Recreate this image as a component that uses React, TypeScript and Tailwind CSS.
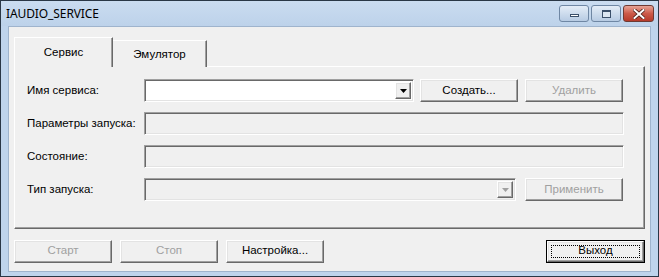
import React from "react";

const raised =
  "border border-t-white border-l-white border-r-[#696969] border-b-[#696969] shadow-[inset_-1px_-1px_0_#a0a0a0,inset_1px_1px_0_#e3e3e3]";
const sunken =
  "border border-t-[#a0a0a0] border-l-[#a0a0a0] border-r-white border-b-white shadow-[inset_1px_1px_0_#696969,inset_-1px_-1px_0_#e3e3e3]";

interface BtnProps {
  label: string;
  disabled?: boolean;
}

const WinButton: React.FC<BtnProps> = ({ label, disabled }) => (
  <button
    className={`w-[98px] h-[23px] bg-[#f0f0f0] text-[11.5px] flex items-center justify-center ${raised} ${
      disabled ? "text-[#a0a0a0]" : "text-black"
    }`}
  >
    {label}
  </button>
);

const ComboBox: React.FC<{ width: string; disabled?: boolean }> = ({
  width,
  disabled,
}) => (
  <div
    className={`${width} h-[23px] flex items-stretch justify-end p-[2px] ${sunken} ${
      disabled ? "bg-[#f0f0f0]" : "bg-white"
    }`}
  >
    <div className={`w-[16px] flex items-center justify-center bg-[#f0f0f0] ${raised}`}>
      <svg width="7" height="4" viewBox="0 0 7 4">
        <path d="M0 0h7L3.5 4z" fill={disabled ? "#a0a0a0" : "#000"} />
      </svg>
    </div>
  </div>
);

const Row: React.FC<{ label: string; children: React.ReactNode }> = ({
  label,
  children,
}) => (
  <div className="flex items-center h-[23px]">
    <span className="w-[117px] text-[11.5px] text-black">{label}</span>
    {children}
  </div>
);

const CaptionButtons: React.FC = () => (
  <div className="flex items-start gap-[2px] pt-[4px]">
    <div className="w-[30px] h-[17px] rounded-[3px] border border-[#6f87a4] bg-gradient-to-b from-[#e4edf7] to-[#b7cbe3] flex items-end justify-center pb-[4px]">
      <div className="w-[9px] h-[3px] bg-white border border-[#3a4f6a]" />
    </div>
    <div className="w-[30px] h-[17px] rounded-[3px] border border-[#6f87a4] bg-gradient-to-b from-[#e4edf7] to-[#b7cbe3] flex items-center justify-center">
      <div className="w-[9px] h-[8px] border border-[#3a4f6a] border-t-2 bg-[#dbe6f2]" />
    </div>
    <div className="w-[31px] h-[17px] rounded-[3px] border border-[#6e3a33] bg-gradient-to-b from-[#e6a396] via-[#cc5a49] to-[#b63a2a] flex items-center justify-center">
      <svg width="12" height="10" viewBox="0 0 12 10">
        <path
          d="M1.5 1L10.5 9M10.5 1L1.5 9"
          stroke="#4a1f18"
          strokeWidth="3.6"
          strokeLinecap="square"
        />
        <path
          d="M1.5 1L10.5 9M10.5 1L1.5 9"
          stroke="#fff"
          strokeWidth="2"
          strokeLinecap="square"
        />
      </svg>
    </div>
  </div>
);

export default function App() {
  return (
    <div className="w-[659px] h-[277px] flex flex-col bg-[#bfd4ec] border border-[#2a3746] font-['Liberation_Sans',Arial,sans-serif]">
      <div className="h-[25px] flex items-start justify-between pl-[5px] pr-[4px] bg-gradient-to-b from-[#cadcf0] to-[#bdd2ea]">
        <span className="pt-[5px] text-[12px] text-black font-['Noto_Sans',sans-serif] leading-[16px] tracking-[-0.1px]">
          IAUDIO_SERVICE
        </span>
        <CaptionButtons />
      </div>

      <div className="flex-1 mx-[7px] mb-[4px] bg-[#f0f0f0] border border-[#9fb4cd] flex flex-col px-[5px] pt-[10px]">
        {/* tab headers */}
        <div className="flex items-end h-[30px] relative z-10 -mb-[1px]">
          <div className="w-[99px] h-[30px] bg-[#f0f0f0] border-t border-l border-white border-r border-r-[#696969] shadow-[inset_-1px_0_0_#a0a0a0] flex items-center justify-center text-[11.5px] text-black">
            Сервис
          </div>
          <div className="w-[94px] h-[27px] bg-[#f0f0f0] border-t border-white border-r border-r-[#696969] shadow-[inset_-1px_0_0_#a0a0a0] flex items-center justify-center text-[11.5px] text-black pt-[1px]">
            Эмулятор
          </div>
        </div>

        {/* tab page */}
        <div className="w-[631px] h-[163px] border border-t-white border-l-white border-r-[#696969] border-b-[#696969] shadow-[inset_-1px_-1px_0_#a0a0a0] flex flex-col gap-[10px] pl-[12px] pt-[12px]">
          <Row label="Имя сервиса:">
            <ComboBox width="w-[270px]" />
            <div className="ml-[6px] flex gap-[7px]">
              <WinButton label="Создать..." />
              <WinButton label="Удалить" disabled />
            </div>
          </Row>
          <Row label="Параметры запуска:">
            <div className={`w-[480px] h-[23px] bg-[#f0f0f0] ${sunken}`} />
          </Row>
          <Row label="Состояние:">
            <div className={`w-[480px] h-[23px] bg-[#f0f0f0] ${sunken}`} />
          </Row>
          <Row label="Тип запуска:">
            <ComboBox width="w-[372px]" disabled />
            <div className="ml-[9px]">
              <WinButton label="Применить" disabled />
            </div>
          </Row>
        </div>

        {/* bottom buttons */}
        <div className="flex items-center mt-[10px] h-[24px]">
          <div className="flex gap-[8px]">
            <WinButton label="Старт" disabled />
            <WinButton label="Стоп" disabled />
            <WinButton label="Настройка..." />
          </div>
          <div className="ml-auto border border-black">
            <button
              className={`w-[97px] h-[21px] bg-[#f0f0f0] text-[11.5px] text-black flex items-center justify-center p-[3px] ${raised}`}
            >
              <span className="w-full h-full flex items-center justify-center border border-dotted border-black">
                Выход
              </span>
            </button>
          </div>
        </div>
      </div>
    </div>
  );
}
